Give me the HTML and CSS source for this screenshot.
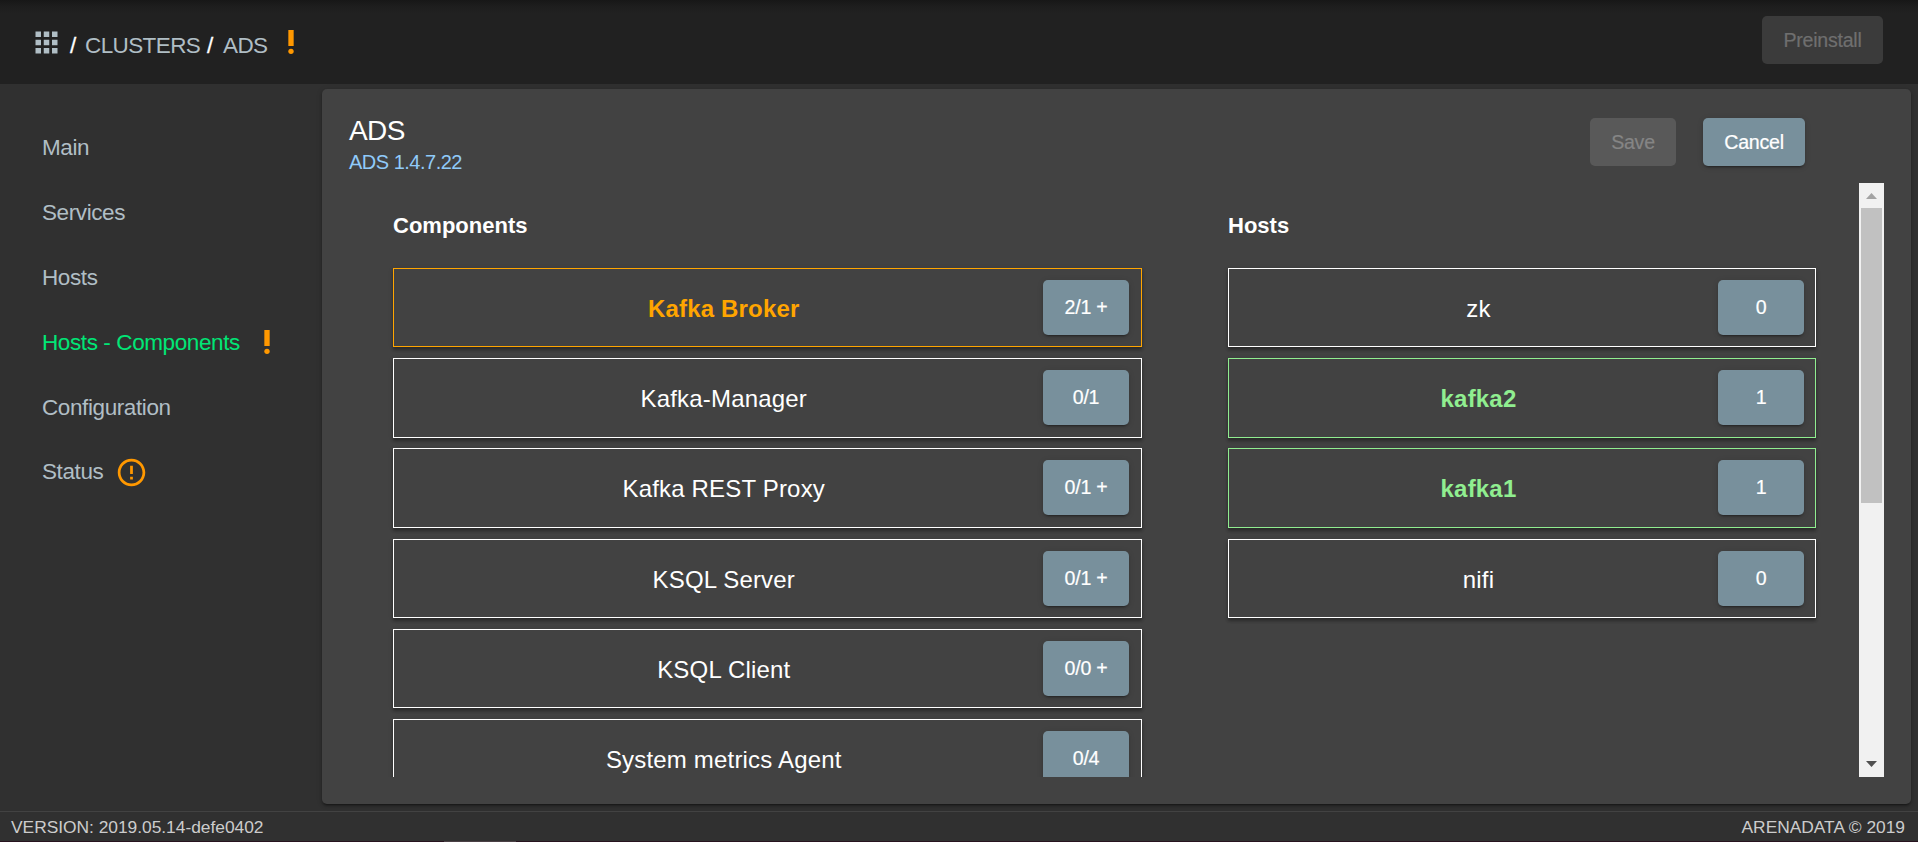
FILE: index.html
```html
<!DOCTYPE html>
<html lang="en">
<head>
<meta charset="utf-8">
<title>ADS - Hosts - Components</title>
<link rel="stylesheet" href="styles.css">
</head>
<body>
<header class="topbar">
  <nav class="crumbs">
    <svg class="icon apps" viewBox="0 0 24 24"><path d="M4 8h4V4H4v4zm6 12h4v-4h-4v4zm-6 0h4v-4H4v4zm0-6h4v-4H4v4zm6 0h4v-4h-4v4zm6-10v4h4V4h-4zm-6 4h4V4h-4v4zm6 6h4v-4h-4v4zm0 6h4v-4h-4v4z"/></svg>
    <span class="sep first">/</span>
    <a class="crumb clusters">CLUSTERS</a>
    <span class="sep second">/</span>
    <a class="crumb ads">ADS</a>
    <svg class="icon alert crumb-alert" viewBox="0 0 24 24"><circle cx="12" cy="19" r="2"/><path d="M10 3h4v12h-4z"/></svg>
  </nav>
  <button class="btn disabled preinstall">Preinstall</button>
</header>
<main class="main">
  <nav class="side">
    <a class="item">Main</a>
    <a class="item">Services</a>
    <a class="item">Hosts</a>
    <a class="item active"><span class="item-text wide">Hosts - Components</span><svg class="icon alert side-alert" viewBox="0 0 24 24"><circle cx="12" cy="19" r="2"/><path d="M10 3h4v12h-4z"/></svg></a>
    <a class="item">Configuration</a>
    <a class="item status"><span class="item-text narrow">Status</span><svg class="icon alert status-alert" viewBox="0 0 24 24"><path d="M11 15h2v2h-2zm0-8h2v6h-2zm.99-5C6.47 2 2 6.48 2 12s4.47 10 9.99 10C17.52 22 22 17.52 22 12S17.52 2 11.99 2zM12 20c-4.42 0-8-3.58-8-8s3.58-8 8-8 8 3.58 8 8-3.58 8-8 8z"/></svg></a>
  </nav>
  <section class="card">
    <div class="card-head">
      <div class="titles">
        <h1 class="title">ADS</h1>
        <a class="subtitle">ADS 1.4.7.22</a>
      </div>
      <div class="actions">
        <button class="btn disabled save">Save</button>
        <button class="btn cancel">Cancel</button>
      </div>
    </div>
    <div class="scroller">
      <div class="columns">
        <div class="column components">
          <h2 class="heading">Components</h2>
          <div class="row warn"><span class="label">Kafka Broker</span><button class="btn count">2/1 +</button></div>
          <div class="row"><span class="label">Kafka-Manager</span><button class="btn count">0/1</button></div>
          <div class="row"><span class="label">Kafka REST Proxy</span><button class="btn count">0/1 +</button></div>
          <div class="row"><span class="label">KSQL Server</span><button class="btn count">0/1 +</button></div>
          <div class="row"><span class="label">KSQL Client</span><button class="btn count">0/0 +</button></div>
          <div class="row"><span class="label">System metrics Agent</span><button class="btn count">0/4</button></div>
        </div>
        <div class="column hosts">
          <h2 class="heading">Hosts</h2>
          <div class="row"><span class="label">zk</span><button class="btn count">0</button></div>
          <div class="row linked"><span class="label">kafka2</span><button class="btn count">1</button></div>
          <div class="row linked"><span class="label">kafka1</span><button class="btn count">1</button></div>
          <div class="row"><span class="label">nifi</span><button class="btn count">0</button></div>
        </div>
      </div>
      <div class="scrollbar">
        <svg class="arrow" viewBox="0 0 25 25"><path fill="#a3a3a3" d="M7 16L12.5 10L18 16z"/></svg>
        <div class="thumb"></div>
        <svg class="arrow down" viewBox="0 0 25 25"><path fill="#505050" d="M7 9L12.5 15L18 9z"/></svg>
      </div>
    </div>
  </section>
</main>
<footer class="footer"><span>VERSION: 2019.05.14-defe0402</span><span>ARENADATA © 2019</span></footer>
<div class="edge"><div class="edge-mark"></div></div>
</body>
</html>
```
FILE: styles.css
```css
* { box-sizing: border-box; }
body {
  margin: 0;
  height: 842px;
  display: flex;
  flex-direction: column;
  overflow: hidden;
  background: #303030;
  color: #fff;
  font-family: "Liberation Sans", Arial, sans-serif;
}
.icon { display: block; flex: none; }
.alert { fill: #ff9800; }

.topbar {
  height: 84px;
  flex: none;
  display: flex;
  justify-content: space-between;
  align-items: flex-start;
  padding: 16px 35px 0 30px;
  background: linear-gradient(#171717, #1d1d1d 6px, #212121 14px);
}
.crumbs {
  display: flex;
  align-items: flex-start;
  font-size: 22.5px;
  letter-spacing: -.6px;
  line-height: 26px;
  padding-top: 10px;
}
.crumbs .sep, .crumbs .crumb { margin-top: 7px; }
.crumb { color: #b0bec5; }
.clusters { width: 115px; }
.ads { width: 45px; }
.apps { width: 33px; height: 33px; fill: #b0bec5; }
.sep { -webkit-text-stroke: .3px #fff; }
.sep.first { margin-left: 7px; width: 15px; }
.sep.second { margin-left: 7px; width: 16px; }
.crumb-alert { width: 32px; height: 32px; margin-left: 7px; }

.btn {
  font-family: inherit;
  font-size: 19.6px;
  letter-spacing: -.25px;
  color: #fff;
  background: #78909c;
  border: 0;
  border-radius: 5px;
  height: 48px;
  padding: 0;
  line-height: 46px;
  text-align: center;
  -webkit-text-stroke: .2px currentColor;
  box-shadow: 0 4px 1px -3px rgba(0,0,0,.2), 0 2px 2px rgba(0,0,0,.14), 0 1px 6px rgba(0,0,0,.12);
}
.btn.disabled { box-shadow: none; }
.preinstall { width: 121px; background: #3b3b3b; color: #6f6f6f; }
.save { width: 86px; background: #595959; color: #858585; }
.cancel { width: 102px; }

.main { flex: 1; display: flex; min-height: 0; }
.side {
  width: 322px;
  flex: none;
  padding: 31px 0 0 42px;
  font-size: 22.5px;
  letter-spacing: -.4px;
  color: #b0bec5;
}
.item { display: flex; align-items: center; height: 65px; line-height: 65px; }
.item-text { white-space: nowrap; }
.item-text.wide { width: 198px; }
.item-text.narrow { width: 61px; }
.active { color: #00e676; }
.side-alert { width: 32px; height: 32px; margin: -1px 0 0 11px; }
.status { height: 64px; line-height: 64px; }
.status-alert { width: 33px; height: 33px; margin-left: 12px; }

.card {
  width: 1589px;
  height: 715px;
  margin-top: 5px;
  padding: 29px 27px 0;
  background: #424242;
  border-radius: 5px;
  box-shadow: 0 3px 1px -2px rgba(0,0,0,.2), 0 2px 3px rgba(0,0,0,.3), 0 1px 6px rgba(0,0,0,.12);
}
.card-head { height: 65px; display: flex; justify-content: space-between; }
.title { margin: -4px 0 0; font-size: 28px; letter-spacing: -.6px; line-height: 34px; font-weight: 400; }
.subtitle { display: block; font-size: 20px; letter-spacing: -.5px; line-height: 28px; color: #90caf9; }
.actions { display: flex; gap: 27px; padding-right: 79px; }

.scroller { height: 594px; display: flex; justify-content: space-between; overflow: hidden; }
.columns { display: flex; gap: 86px; padding-left: 44px; }
.column { display: flex; flex-direction: column; gap: 10.8px; }
.components { width: 749px; }
.hosts { width: 588px; }
.heading { flex: none; margin: 0; height: 74.2px; padding-top: 30px; font-size: 22px; line-height: 26px; font-weight: 700; }
.row {
  flex: none;
  height: 79.4px;
  display: flex;
  align-items: flex-start;
  padding: 11px 12px 0 10.5px;
  border: 1px solid #fff;
  box-shadow: 0 3px 3px rgba(0,0,0,.3), 0 1px 5px rgba(0,0,0,.12);
}
.hosts .row { padding: 11px 11px 0 10px; }
.label { flex: 1; text-align: center; font-size: 24px; letter-spacing: .18px; line-height: 58.5px; }
.warn { color: orange; border-color: orange; }
.linked { color: lightgreen; border-color: lightgreen; }
.warn .label, .linked .label { font-weight: 700; }
.count { width: 86px; height: 55px; line-height: 53px; }

.scrollbar { width: 25px; background: #f1f1f1; display: flex; flex-direction: column; }
.arrow { width: 25px; height: 25px; display: block; }
.thumb { height: 295px; margin: 0 2px; background: #c1c1c1; }
.down { margin-top: auto; }

.footer {
  height: 30px;
  flex: none;
  display: flex;
  justify-content: space-between;
  padding: 0 13px 0 11px;
  border-top: 1px solid #424242;
  font-size: 17.4px;
  line-height: 31px;
  letter-spacing: -.03px;
  color: #ccc;
}
.edge { height: 1px; flex: none; background: #27131f; padding-left: 444px; }
.edge-mark { width: 72px; height: 1px; background: #4a4045; }
```
